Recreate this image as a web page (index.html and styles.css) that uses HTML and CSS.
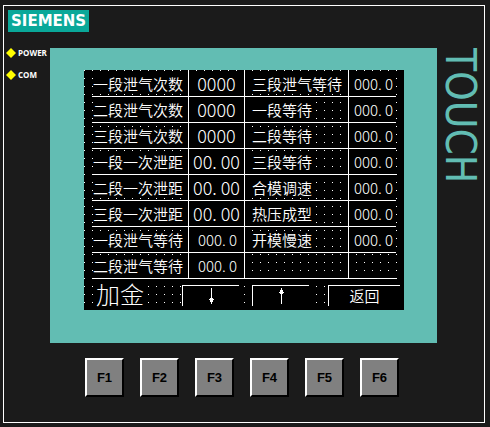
FILE: index.html
```html
<!DOCTYPE html>
<html lang="zh-CN">
<head>
    <meta charset="utf-8">
    <title>SIEMENS TOUCH</title>
    <link rel="stylesheet" href="styles.css">
</head>
<body>
    <div class="panel">
        <header class="panel-header">
            <span class="logo">SIEMENS</span>
        </header>

        <div class="panel-body">
            <div class="leds">
                <div class="led">
                    <svg width="10" height="10" viewBox="0 0 10 10"><path d="M5 0L10 5L5 10L0 5Z" fill="#ffff00"/></svg>
                    <span>POWER</span>
                </div>
                <div class="led">
                    <svg width="10" height="10" viewBox="0 0 10 10"><path d="M5 0L10 5L5 10L0 5Z" fill="#ffff00"/></svg>
                    <span>COM</span>
                </div>
            </div>

            <div class="bezel">
                <div class="screen">
                    <table class="params">
                        <colgroup>
                            <col class="col-name">
                            <col class="col-value">
                            <col class="col-name2">
                            <col class="col-value2">
                        </colgroup>
                        <tr>
                            <td><label for="count1">一段泄气次数</label></td>
                            <td><input type="text" id="count1" class="large" value="0000"></td>
                            <td><label for="wait3a">三段泄气等待</label></td>
                            <td><input type="text" id="wait3a" value="000. 0"></td>
                        </tr>
                        <tr>
                            <td><label for="count2">二段泄气次数</label></td>
                            <td><input type="text" id="count2" class="large" value="0000"></td>
                            <td><label for="hold1">一段等待</label></td>
                            <td><input type="text" id="hold1" value="000. 0"></td>
                        </tr>
                        <tr>
                            <td><label for="count3">三段泄气次数</label></td>
                            <td><input type="text" id="count3" class="large" value="0000"></td>
                            <td><label for="hold2">二段等待</label></td>
                            <td><input type="text" id="hold2" value="000. 0"></td>
                        </tr>
                        <tr>
                            <td><label for="dist1">一段一次泄距</label></td>
                            <td><input type="text" id="dist1" class="large" value="00. 00"></td>
                            <td><label for="hold3">三段等待</label></td>
                            <td><input type="text" id="hold3" value="000. 0"></td>
                        </tr>
                        <tr>
                            <td><label for="dist2">二段一次泄距</label></td>
                            <td><input type="text" id="dist2" class="large" value="00. 00"></td>
                            <td><label for="clamp">合模调速</label></td>
                            <td><input type="text" id="clamp" value="000. 0"></td>
                        </tr>
                        <tr>
                            <td><label for="dist3">三段一次泄距</label></td>
                            <td><input type="text" id="dist3" class="large" value="00. 00"></td>
                            <td><label for="press">热压成型</label></td>
                            <td><input type="text" id="press" value="000. 0"></td>
                        </tr>
                        <tr>
                            <td><label for="wait1">一段泄气等待</label></td>
                            <td><input type="text" id="wait1" value="000. 0"></td>
                            <td><label for="open">开模慢速</label></td>
                            <td><input type="text" id="open" value="000. 0"></td>
                        </tr>
                        <tr>
                            <td><label for="wait2">二段泄气等待</label></td>
                            <td><input type="text" id="wait2" value="000. 0"></td>
                            <td></td>
                            <td></td>
                        </tr>
                    </table>

                    <div class="screen-footer">
                        <span class="title">加金</span>
                        <button type="button" class="nav" aria-label="Down">
                            <svg width="7" height="16" viewBox="0 0 7 16"><path d="M3 0h1v16h-1zM2 10h3v4h-3zM1 11h5v1h-5z" fill="#fff"/></svg>
                        </button>
                        <button type="button" class="nav" aria-label="Up">
                            <svg width="7" height="16" viewBox="0 0 7 16"><path d="M3 0h1v16h-1zM2 2h3v4h-3zM1 4h5v1h-5z" fill="#fff"/></svg>
                        </button>
                        <button type="button" class="nav back">返回</button>
                    </div>
                </div>
            </div>

            <div class="touch">TOUCH</div>
        </div>

        <div class="keys">
            <button type="button" class="key">F1</button>
            <button type="button" class="key">F2</button>
            <button type="button" class="key">F3</button>
            <button type="button" class="key">F4</button>
            <button type="button" class="key">F5</button>
            <button type="button" class="key">F6</button>
        </div>
    </div>
</body>
</html>
```
FILE: styles.css
```css
* {
    box-sizing: border-box;
}

body {
    margin: 0;
    padding: 5px 5px 4px 3px;
    background: #1b1b1b;
    color: #fff;
    font-family: "Liberation Sans", Arial, sans-serif;
}

.panel {
    border: 1px solid #fff;
    padding-bottom: 25px;
}

.panel-header {
    display: flex;
    padding: 4px 4px 16px;
}

.logo {
    padding: 0 3px;
    background: #0aa899;
    font: bold 15px/22px "DejaVu Sans", sans-serif;
}

.panel-body {
    display: grid;
    grid-template-columns: 46px 1fr 47px;
}

/* status lamps */
.leds {
    display: flex;
    flex-direction: column;
    gap: 12px;
    padding-left: 2px;
}

.led {
    display: flex;
    align-items: center;
    gap: 2px;
    font: bold 8px/10px "Open Sans", sans-serif;
}

.led svg {
    flex: none;
}

/* display */
.bezel {
    padding: 22px 33px 33px 34px;
    background: #62bdb3;
}

.screen {
    padding: 1px 4px 4px 8px;
    background-color: #000;
    background-image:
        linear-gradient(90deg, transparent 1px, #000 1px),
        linear-gradient(#fff 1px, #000 1px);
    background-size: 8px 8px;
    font-family: "Noto Sans CJK SC", sans-serif;
    font-weight: 300;
}

.params {
    width: calc(100% - 4px);
    table-layout: fixed;
    border-spacing: 0;
}

.col-name {
    width: 97px;
}

.col-value {
    width: 56px;
}

.col-name2 {
    width: 104px;
}

.params td {
    height: 26px;
    padding: 0;
    border-right: 1px solid #fff;
    border-bottom: 1px solid #fff;
    line-height: 18px;
}

.params td:last-child {
    border-right: none;
}

.params label {
    display: block;
    width: fit-content;
    margin-left: 1px;
    background: #000;
    font-size: 15px;
    font-weight: 350;
    white-space: nowrap;
}

.params td:nth-child(3) label {
    margin-left: 7px;
}

.params input {
    display: block;
    width: 100%;
    height: 25px;
    padding: 0 0 1px 2px;
    border: none;
    background: #000;
    color: #fff;
    font: inherit;
    font-size: 15px;
    text-align: center;
}

.params input.large {
    padding-left: 0;
    font-size: 18px;
}

.screen-footer {
    display: flex;
    align-items: flex-end;
    height: 27px;
}

.title {
    margin: 0 auto 0 4px;
    background: #000;
    font-size: 24px;
    line-height: 24px;
}

.nav {
    display: flex;
    align-items: center;
    justify-content: center;
    width: 57px;
    height: 21px;
    margin-right: 13px;
    padding: 0;
    border: solid #fff;
    border-width: 1px 0 0 1px;
    background: #000;
    color: #fff;
    font: inherit;
    font-size: 15px;
    font-weight: 350;
    line-height: 18px;
}

.back {
    width: 72px;
    margin: 0 0 0 6px;
}

.touch {
    color: #62bdb3;
    font: 42px/48px "DejaVu Sans Condensed", "DejaVu Sans", sans-serif;
    writing-mode: vertical-rl;
}

/* function keys */
.keys {
    display: flex;
    gap: 16px;
    padding: 15px 0 0 81px;
}

.key {
    width: 39px;
    height: 39px;
    padding: 0;
    border: 2px solid;
    border-color: #fff #000 #000 #fff;
    background: #808080;
    color: #000;
    font: bold 13px/16px "Liberation Sans", Arial, sans-serif;
}
```
